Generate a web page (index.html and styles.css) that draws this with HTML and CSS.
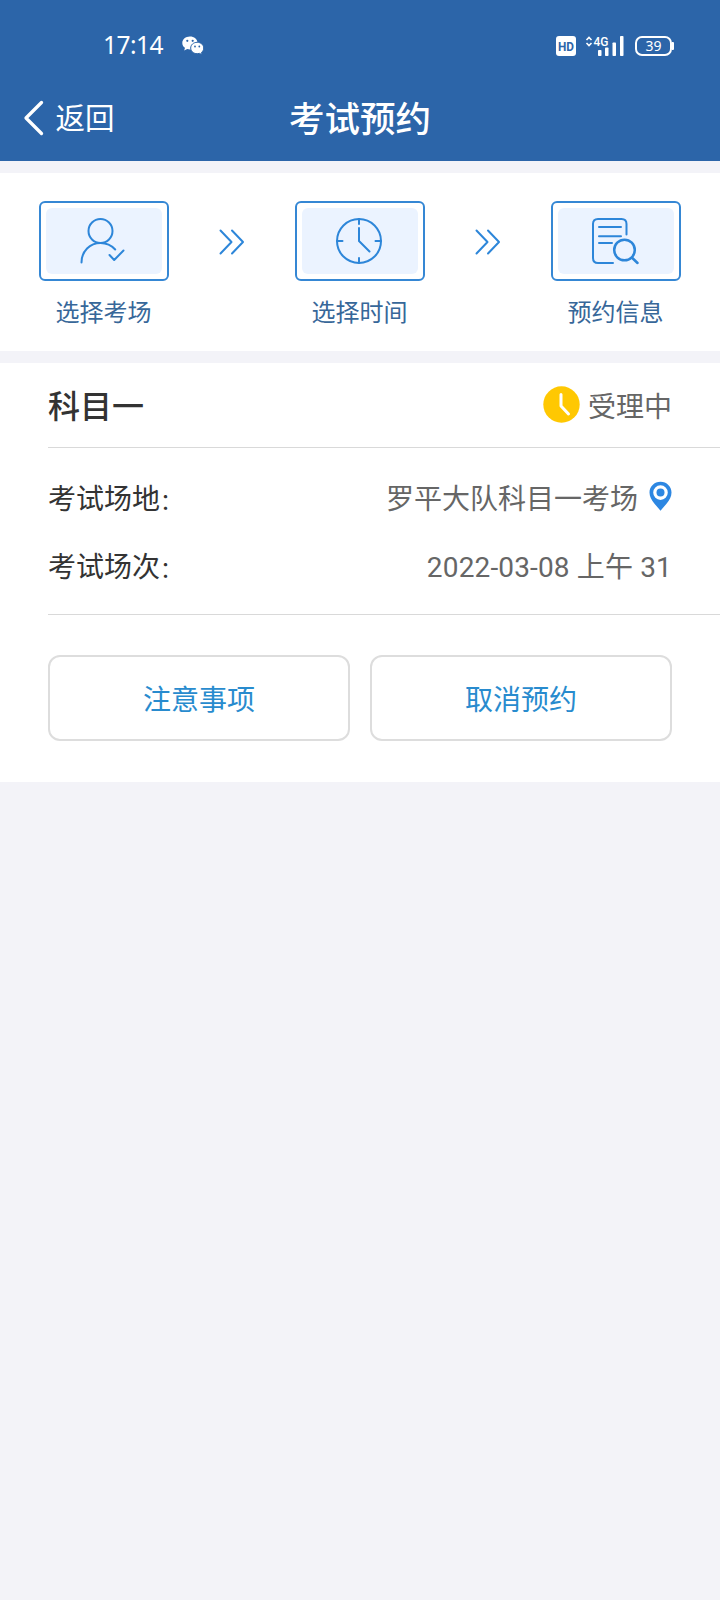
FILE: index.html
```html
<!DOCTYPE html>
<html lang="zh-CN">
<head>
<meta charset="utf-8">
<title>考试预约</title>
<link rel="stylesheet" href="styles.css">
</head>
<body>
<header class="header">
  <div class="status">
    <span class="status-time">17:14</span>
    <svg class="status-wechat" width="22" height="20" viewBox="0 0 22 20">
      <path fill="#fff" d="M7.900.5C3.700.5.300 3.300.300 6.900c0 2 1 3.700 2.700 4.900l-.8 2.800 3-1.500c.9.2 1.800.4 2.700.4 4.200 0 7.600-2.900 7.600-6.600S12.100.5 7.900.5z"/>
      <path fill="#fff" stroke="#2c65a9" stroke-width="1" d="M15.200 6.300c3.700 0 6.500 2.600 6.500 5.700 0 1.800-.8 3.300-2.200 4.400l.6 2.300-2.500-1.300c-.8.2-1.500.3-2.400.3-3.700 0-6.500-2.500-6.500-5.700s2.800-5.700 6.500-5.700z"/>
      <g fill="#2c65a9"><circle cx="5.300" cy="4.800" r="1.100"/><circle cx="10.700" cy="4.800" r="1.100"/><circle cx="13" cy="10.500" r=".9"/><circle cx="17.300" cy="10.500" r=".9"/></g>
    </svg>
    <div class="status-right">
      <svg class="hd" width="20" height="20" viewBox="0 0 20 20"><rect width="20" height="20" rx="3" fill="#fff"/><text class="hd-text" x="2" y="15" textLength="16" lengthAdjust="spacingAndGlyphs">HD</text></svg>
      <svg class="signal" width="40" height="22" viewBox="0 0 40 22">
        <path fill="none" stroke="#fff" stroke-width="1.600" d="M1.500 5 4 2.500 6.500 5M1.500 8 4 10.500 6.500 8"/>
        <text class="signal-text" x="8.500" y="10.700" textLength="15" lengthAdjust="spacingAndGlyphs">4G</text>
        <g fill="#fff"><rect x="13" y="15" width="3.500" height="6" rx=".8"/><rect x="20" y="12.500" width="3.500" height="8.500" rx=".8"/><rect x="27.500" y="7.500" width="3.500" height="13.500" rx=".8"/><rect x="35" y="1" width="3.500" height="20" rx=".8"/></g>
      </svg>
      <span class="battery"><span class="battery-body">39</span><span class="battery-tip"></span></span>
    </div>
  </div>
  <nav class="nav">
    <a class="back">
      <svg class="chevron" width="22" height="36" viewBox="0 0 22 36"><path d="M18.500 2.500 3 18l15.500 15.500" fill="none" stroke="#fff" stroke-width="3.300" stroke-linecap="round" stroke-linejoin="round"/></svg>
      <span>返回</span>
    </a>
    <h1 class="title">考试预约</h1>
  </nav>
</header>

<section class="steps">
  <div class="step">
    <div class="step-box"><div class="step-fill">
      <svg class="icon" width="48" height="48" viewBox="0 0 48 48"><circle cx="21.500" cy="14" r="12"/><path d="M2.500 45.500C2.500 34 11 26 21.500 26c6 0 11 2.400 14.700 6.500M30.500 38l4.700 5L44.500 33.500"/></svg>
    </div></div>
    <span class="step-label">选择考场</span>
  </div>
  <svg class="arrows" width="26" height="26" viewBox="0 0 26 26"><path d="M1.500 1.500 12.500 13 1.500 24.500M13 1.500 24 13 13 24.500"/></svg>
  <div class="step">
    <div class="step-box"><div class="step-fill">
      <svg class="icon" width="48" height="48" viewBox="0 0 48 48"><circle cx="24" cy="24" r="22"/><path d="M24 2v5M24 41v5M2 24h5.500M40.500 24h5.500M24 11v13L34.500 34.500"/></svg>
    </div></div>
    <span class="step-label">选择时间</span>
  </div>
  <svg class="arrows" width="26" height="26" viewBox="0 0 26 26"><path d="M1.500 1.500 12.500 13 1.500 24.500M13 1.500 24 13 13 24.500"/></svg>
  <div class="step">
    <div class="step-box"><div class="step-fill">
      <svg class="icon" width="48" height="48" viewBox="0 0 48 48"><path d="M35.500 17.500V7c0-3-2-5-5-5H7C4 2 2 4 2 7v34c0 3 2 5 5 5h15M8 10h22M8 19.200h22M8 26h13"/><g stroke-width="2.500"><circle cx="33.500" cy="33" r="10.300"/><path d="M40.800 40.500 46.500 46"/></g></svg>
    </div></div>
    <span class="step-label">预约信息</span>
  </div>
</section>

<main class="card">
  <div class="card-head">
    <h2 class="subject">科目一</h2>
    <span class="state">
      <svg width="37" height="37" viewBox="0 0 37 37"><circle cx="18.500" cy="18.500" r="18.200" fill="#ffc802"/><path d="M18 8.500V20l7.500 8" fill="none" stroke="#fff" stroke-width="3" stroke-linecap="round" stroke-linejoin="round"/></svg>
      <span class="state-text">受理中</span>
    </span>
  </div>
  <dl class="info">
    <div class="row">
      <dt>考试场地<span class="colon">：</span></dt>
      <dd>罗平大队科目一考场
        <svg class="pin" width="23" height="30" viewBox="0 0 23 30"><path fill="#2d87e2" fill-rule="evenodd" d="M11.500.7C5.300.7.500 5.500.500 11.500c0 4 2 7.500 5 11.200l6 7 6-7c3-3.700 5-7.200 5-11.200C22.500 5.500 17.700.7 11.500.7zm0 3.600a7.300 7.300 0 1 1 0 14.600 7.300 7.300 0 0 1 0-14.600z"/><circle cx="11.500" cy="11.600" r="4" fill="#2d87e2"/></svg>
      </dd>
    </div>
    <div class="row">
      <dt>考试场次<span class="colon">：</span></dt>
      <dd class="session">2022-03-08 上午 31</dd>
    </div>
  </dl>
  <div class="actions">
    <button class="btn">注意事项</button>
    <button class="btn">取消预约</button>
  </div>
</main>
</body>
</html>
```
FILE: styles.css
```css
* { box-sizing: border-box; }
body {
  margin: 0;
  min-height: 1600px;
  background: #f3f3f8;
  color: #333;
  font-family: Roboto, "Noto Sans CJK SC", sans-serif;
}
h1, h2, dl, dd { margin: 0; }

.header { height: 161px; background: #2c65a9; color: #fff; }
.status {
  display: flex;
  align-items: center;
  height: 76px;
  padding: 16px 46px 0 103px;
}
.status-time {
  width: 79px;
  padding-bottom: 2px;
  font: 24.500px/30px "Noto Sans", sans-serif;
  letter-spacing: -0.5px;
}
.status-right { display: flex; align-items: center; margin-left: auto; }
.hd { overflow: visible; }
.hd-text { fill: #2c65a9; font: bold 13.500px Roboto, sans-serif; }
.signal { margin: 0 10px 0 9px; overflow: visible; }
.signal-text { fill: #fff; font: 500 13px Roboto, sans-serif; }
.battery { display: flex; align-items: center; }
.battery-body {
  width: 37px;
  height: 20px;
  border: 2px solid #fff;
  border-radius: 7px;
  font: 14px/15px "Noto Sans", sans-serif;
  text-align: center;
}
.battery-tip { width: 2px; height: 8px; border-radius: 0 1px 1px 0; background: #fff; }

.nav {
  display: grid;
  grid-template-columns: 1fr auto 1fr;
  align-items: center;
  height: 85px;
  padding: 0 23px;
}
.back { display: flex; align-items: center; gap: 10.500px; font-size: 29.500px; line-height: 40px; }
.chevron { margin-bottom: 2px; }
.title { padding-top: 3px; font-size: 35.500px; font-weight: 500; line-height: 50px; }

.steps {
  display: flex;
  justify-content: space-between;
  height: 178px;
  margin-top: 12px;
  padding: 28px 39.500px 0 38.500px;
  background: #fff;
}
.step { display: flex; flex-direction: column; align-items: center; }
.step-box {
  width: 130px;
  height: 80px;
  padding: 5px;
  border: 2px solid #3587d4;
  border-radius: 6px;
}
.step-fill {
  display: flex;
  align-items: center;
  justify-content: center;
  height: 100%;
  border-radius: 6px;
  background: #ebf3ff;
}
.icon, .arrows { fill: none; stroke: #2d86d9; stroke-width: 2; stroke-linecap: round; stroke-linejoin: round; }
.icon { margin-right: 1px; }
.arrows { margin-top: 28px; }
.step-label { margin-top: 14px; color: #376799; font-size: 24px; line-height: 36px; }

.card { height: 418.500px; margin-top: 12px; padding-left: 48px; background: #fff; }
.card-head {
  display: flex;
  align-items: center;
  justify-content: space-between;
  height: 85px;
  padding-right: 48px;
  border-bottom: 1px solid #d9d9d9;
}
.subject { padding-top: 3px; font-size: 32px; font-weight: 500; line-height: 44px; }
.state { display: flex; align-items: center; gap: 7.500px; color: #666; font-size: 28px; line-height: 40px; }
.state svg { margin-bottom: 1px; }
.state-text { padding-top: 5px; }
.info { height: 167px; padding: 15px 48px 0 0; border-bottom: 1px solid #d9d9d9; }
.row {
  display: flex;
  align-items: center;
  justify-content: space-between;
  height: 68px;
  font-size: 28px;
}
.row dd { display: flex; align-items: center; gap: 11px; color: #666; }
.colon { font-size: 22px; }
.pin { margin-bottom: 2px; }
.session { letter-spacing: 0.15px; }
.actions { display: grid; grid-template-columns: 1fr 1fr; gap: 20px; padding: 40px 48px 0 0; }
.btn {
  height: 86px;
  padding: 5px 0 0;
  border: 2px solid #ddd;
  border-radius: 12px;
  background: #fff;
  color: #288bce;
  font: 28px/40px Roboto, "Noto Sans CJK SC", sans-serif;
}
```
